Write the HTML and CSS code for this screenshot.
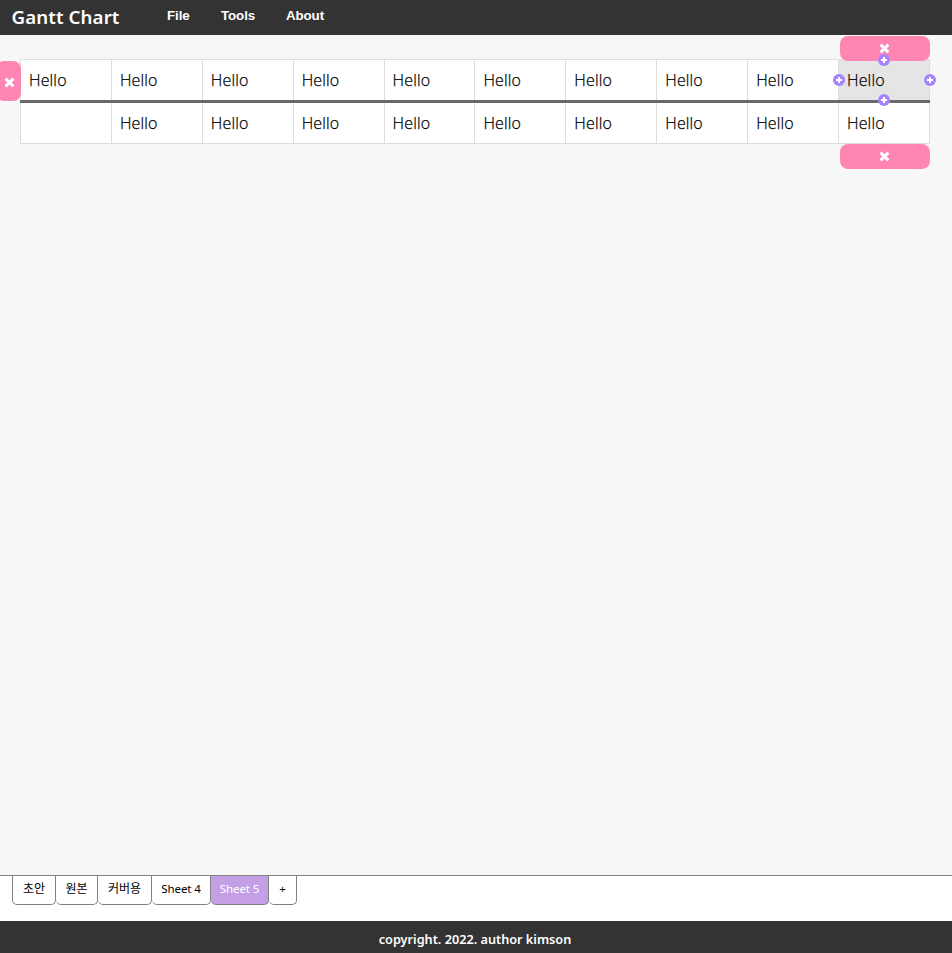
FILE: index.html
```html
<!DOCTYPE html>
<html lang="ko">
<head>
<meta charset="utf-8">
<title>Gantt Chart</title>
<link rel="stylesheet" href="styles.css">
</head>
<body>
<svg class="defs" aria-hidden="true">
  <symbol id="cross" viewBox="0 0 11 11"><path d="M1.6 1.6L9.4 9.4M9.4 1.6L1.6 9.4" stroke="#fff" stroke-width="2.9"/></symbol>
  <symbol id="plus" viewBox="0 0 12 12"><circle cx="6" cy="6" r="6" fill="#a883ff"/><path d="M6 3V9M3 6H9" stroke="#fff" stroke-width="2"/></symbol>
</svg>
<header class="header">
  <h1 class="brand">Gantt Chart</h1>
  <nav class="menu"><a class="file">File</a><a class="tools">Tools</a><a class="about">About</a></nav>
</header>
<main class="board">
  <div class="table">
    <div class="row head">
      <div class="cell"><span>Hello</span></div><div class="cell"><span>Hello</span></div><div class="cell"><span>Hello</span></div><div class="cell"><span>Hello</span></div><div class="cell"><span>Hello</span></div><div class="cell"><span>Hello</span></div><div class="cell"><span>Hello</span></div><div class="cell"><span>Hello</span></div><div class="cell"><span>Hello</span></div><div class="cell selected"><span>Hello</span></div>
    </div>
    <div class="row">
      <div class="cell"></div><div class="cell"><span>Hello</span></div><div class="cell"><span>Hello</span></div><div class="cell"><span>Hello</span></div><div class="cell"><span>Hello</span></div><div class="cell"><span>Hello</span></div><div class="cell"><span>Hello</span></div><div class="cell"><span>Hello</span></div><div class="cell"><span>Hello</span></div><div class="cell"><span>Hello</span></div>
    </div>
    <div class="remove remove-top"><svg><use href="#cross"/></svg></div>
    <div class="remove remove-bottom"><svg><use href="#cross"/></svg></div>
    <div class="remove remove-left"><svg><use href="#cross"/></svg></div>
    <svg class="add add-top"><use href="#plus"/></svg>
    <svg class="add add-left"><use href="#plus"/></svg>
    <svg class="add add-right"><use href="#plus"/></svg>
    <svg class="add add-bottom"><use href="#plus"/></svg>
  </div>
</main>
<div class="tabs">
  <div class="tab t1"><span>초안</span></div><div class="tab t2"><span>원본</span></div><div class="tab t3"><span>커버용</span></div><div class="tab t4"><span>Sheet 4</span></div><div class="tab t5 active"><span>Sheet 5</span></div><div class="tab t6"><span>+</span></div>
</div>
<footer class="footer"><span>copyright. 2022. author kimson</span></footer>
</body>
</html>
```

FILE: styles.css
```css
* { box-sizing: border-box; }
body {
  margin: 0;
  height: 953px;
  overflow: hidden;
  display: flex;
  flex-direction: column;
  font-family: "Noto Sans", "Noto Sans CJK KR", sans-serif;
  color: #000;
  background: #fff;
}
.defs { position: absolute; width: 0; height: 0; }
.header {
  height: 35px;
  flex: none;
  display: flex;
  background: #333;
  color: #fff;
}
.brand {
  width: 155px;
  margin: 0;
  padding-left: 11.5px;
  font-size: 18.7px;
  line-height: 34px;
  font-weight: 650;
  letter-spacing: 0.1px;
  white-space: nowrap;
}
.menu {
  display: flex;
  padding-left: 12px;
  font: bold 13.33px/31px "Liberation Sans", sans-serif;
  letter-spacing: -0.1px;
}
.file { width: 54px; }
.tools { width: 65px; }
.board {
  flex: 1;
  padding: 24px 22px 0 20px;
  background: #f7f7f7;
}
.table {
  position: relative;
  width: 910px;
  height: 85px;
  border-right: 1px solid #ddd;
}
.row { display: flex; height: 41px; border-bottom: 1px solid #ddd; }
.row.head { height: 44px; border-top: 1px solid #ddd; border-bottom: 3px solid #6b6969; margin-right: -1px; padding-right: 1px; }
.cell {
  width: 90.9px;
  padding-left: 8px;
  border-left: 1px solid #ddd;
  background: #fff;
  font-family: "Open Sans", sans-serif;
  font-weight: 300;
  font-size: 16px;
  letter-spacing: 0.15px;
  -webkit-text-stroke: 0.25px #000;
  line-height: 40px;
}
.selected { background: #e5e5e5; }
.remove {
  position: absolute;
  width: 90px;
  height: 25px;
  border-radius: 8px;
  background: #ff85b3;
  display: flex;
  align-items: center;
  justify-content: center;
}
.remove svg { width: 11px; height: 11px; margin-right: 1px; }
.remove-top { left: 820px; top: -23px; }
.remove-bottom { left: 820px; top: 85px; }
.remove-left { left: -24px; top: 2px; width: 25px; height: 40px; }
.remove-left svg { margin: 3px 0 0 1px; }
.add { position: absolute; width: 12px; height: 12px; }
.add-top { left: 858px; top: -5px; }
.add-left { left: 813px; top: 15px; }
.add-right { left: 904px; top: 15px; }
.add-bottom { left: 858px; top: 35px; }
.tabs {
  height: 46px;
  flex: none;
  display: flex;
  padding-left: 12px;
  border-top: 1px solid #808080;
}
.tab {
  height: 29px;
  border: 1px solid #808080;
  border-top: 0;
  border-left-width: 0;
  border-radius: 0 0 5px 5px;
  text-align: center;
  font-size: 11.5px;
  letter-spacing: -0.1px;
  line-height: 26px;
  white-space: nowrap;
}
.t1 { width: 44px; border-left-width: 1px; }
.t2 { width: 42px; }
.t3 { width: 54px; }
.t1, .t2, .t3 { font-size: 12px; }
.t4 { width: 59px; }
.t5 { width: 58px; }
.t6 { width: 28px; }
.tab.active { background: #c49fe5; color: #fff; }
.footer {
  height: 32px;
  flex: none;
  padding-right: 2px;
  background: #333;
  color: #fff;
  text-align: center;
  font-size: 12.7px;
  font-weight: 650;
  line-height: 36px;
}
```
